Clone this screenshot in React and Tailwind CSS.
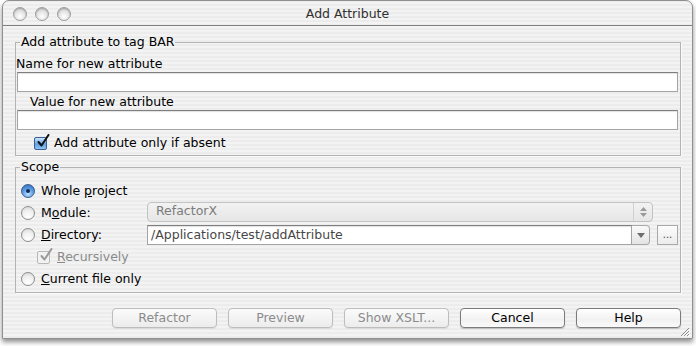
import React from "react";

const FONT = { fontFamily: '"DejaVu Sans", "Liberation Sans", sans-serif' };

function Light() {
  return (
    <div className="w-[14px] h-[14px] rounded-full border border-[#9d9d9d] bg-[radial-gradient(circle_at_50%_70%,#ffffff_0%,#e6e6e6_45%,#bdbdbd_100%)] shadow-[inset_0_1px_1px_rgba(0,0,0,0.2)]" />
  );
}

function Radio({ checked }) {
  if (checked) {
    return (
      <div className="w-[14px] h-[14px] shrink-0 rounded-full border border-[#3a5f94] bg-[radial-gradient(circle_at_50%_75%,#bfe3ff_0%,#5a9be0_50%,#2c62b4_100%)] flex items-center justify-center">
        <div className="w-[4px] h-[4px] rounded-full bg-[#102a55]" />
      </div>
    );
  }
  return (
    <div className="w-[14px] h-[14px] shrink-0 rounded-full border border-[#8e8e8e] bg-[radial-gradient(circle_at_50%_80%,#ffffff_0%,#f1f1f1_50%,#d2d2d2_100%)]" />
  );
}

function Check({ disabled }) {
  return (
    <div
      className={
        disabled
          ? "w-[13px] h-[13px] shrink-0 border border-[#b8b8b8] bg-[#f2f2f2] rounded-[2px] relative"
          : "w-[13px] h-[13px] shrink-0 border border-[#3a5f94] bg-[linear-gradient(#cfe6ff,#5f9ee3_55%,#8fc3f5)] rounded-[2px] relative"
      }
    >
      <svg viewBox="0 0 14 14" className="absolute left-[1px] top-[-4px] w-[14px] h-[14px]">
        <path
          d="M2.5 8 L5.5 11.5 L12.5 1"
          fill="none"
          stroke={disabled ? "#9a9a9a" : "#111"}
          strokeWidth="2"
          strokeLinecap="round"
          strokeLinejoin="round"
        />
      </svg>
    </div>
  );
}

function TextField({ className = "" }) {
  return (
    <div
      className={`h-[20px] bg-white border border-[#a4a4a4] border-t-[#7e7e7e] shadow-[inset_0_1px_1px_rgba(0,0,0,0.12)] ${className}`}
    />
  );
}

function Button({ label, disabled }) {
  return (
    <div
      className={
        disabled
          ? "w-[105px] h-[20px] rounded-[4px] border border-[#bdbdbd] bg-[linear-gradient(#fbfbfb,#ececec)] text-[#8b8b8b] flex items-center justify-center shadow-[0_1px_1px_rgba(0,0,0,0.08)]"
          : "w-[105px] h-[20px] rounded-[4px] border border-[#7b7b7b] bg-[linear-gradient(#ffffff,#f1f1f1_60%,#fafafa)] text-black flex items-center justify-center shadow-[0_1px_1px_rgba(0,0,0,0.2)]"
      }
    >
      {label}
    </div>
  );
}

function Legend({ children }) {
  return <legend className="ml-[4px] px-[1px] leading-4 text-black">{children}</legend>;
}

export default function App() {
  const stripes =
    "bg-[repeating-linear-gradient(0deg,#ececec_0px,#ececec_2px,#f3f3f3_2px,#f3f3f3_4px)]";

  return (
    <div className="w-[696px] h-[346px] bg-white text-[12.5px] overflow-hidden" style={FONT}>
      <div
        className={`relative ml-[2px] w-[691px] h-[339px] border border-[#8f8f8f] rounded-t-[7px] overflow-hidden shadow-[0_3px_5px_rgba(0,0,0,0.45)] ${stripes}`}
      >
        {/* title bar */}
        <div className="h-[25px] border-b border-[#808080] flex items-center relative">
          <div className="flex gap-[8px] pl-[10px] pt-[2px]">
            <Light />
            <Light />
            <Light />
          </div>
          <div className="absolute inset-0 flex items-center justify-center pt-[2px] text-[#303030]">
            Add Attribute
          </div>
        </div>

        <div className="pl-[12px] pr-[11px]">
          {/* fieldset 1 */}
          <fieldset className="mt-[8px] border border-[#b3b3b3] shadow-[1px_1px_0_#fafafa] pb-[4px]">
            <Legend>Add attribute to tag BAR</Legend>
            <div className="pt-[6px] leading-4 text-black">Name for new attribute</div>
            <TextField className="ml-[1px] mr-[2px]" />
            <div className="mt-[2px] ml-[14px] leading-4 text-black">Value for new attribute</div>
            <TextField className="ml-[1px] mr-[2px]" />
            <div className="mt-[5px] ml-[18px] h-4 flex items-center gap-[7px] text-black">
              <Check />
              <span>Add attribute only if absent</span>
            </div>
          </fieldset>

          {/* fieldset 2 */}
          <fieldset className="mt-[3px] border border-[#b3b3b3] shadow-[1px_1px_0_#fafafa] pt-[5px] pb-[2px]">
            <Legend>Scope</Legend>
            <div className="h-[22px] flex items-center pl-[5px] text-black">
              <Radio checked />
              <span className="ml-[6px]">
                Whole <span className="underline">p</span>roject
              </span>
            </div>
            <div className="h-[22px] flex items-center pl-[5px] pr-[27px] text-black">
              <Radio />
              <span className="ml-[6px] w-[106px]">
                M<span className="underline">o</span>dule:
              </span>
              <div className="flex-1 h-[20px] -mt-[3px] rounded-[4px] border border-[#c2c2c2] bg-[linear-gradient(#f2f2f2,#e6e6e6)] flex items-center">
                <span className="flex-1 pl-[8px] text-[#7c7c7c]">RefactorX</span>
                <div className="w-[19px] h-full border-l border-[#d0d0d0] flex flex-col items-center justify-center gap-[2px]">
                  <svg width="7" height="4" viewBox="0 0 7 4">
                    <path d="M0 4 L3.5 0 L7 4 Z" fill="#9a9a9a" />
                  </svg>
                  <svg width="7" height="4" viewBox="0 0 7 4">
                    <path d="M0 0 L3.5 4 L7 0 Z" fill="#9a9a9a" />
                  </svg>
                </div>
              </div>
            </div>
            <div className="h-[22px] flex items-center pl-[5px] pr-[2px] text-black">
              <Radio />
              <span className="ml-[6px] w-[106px]">
                <span className="underline">D</span>irectory:
              </span>
              <div className="flex-1 h-[20px] flex">
                <div className="flex-1 bg-white border border-[#a4a4a4] border-t-[#7e7e7e] flex items-center pl-[3px] text-[#474747] shadow-[inset_0_1px_1px_rgba(0,0,0,0.12)]">
                  /Applications/test/addAttribute
                </div>
                <div className="w-[18px] rounded-r-[4px] border border-l-0 border-[#a8a8a8] bg-[linear-gradient(#fafafa,#e4e4e4)] flex items-center justify-center">
                  <svg width="8" height="5" viewBox="0 0 8 5">
                    <path d="M0 0 L4 5 L8 0 Z" fill="#6d6d6d" />
                  </svg>
                </div>
              </div>
              <div className="ml-[7px] w-[21px] h-[20px] border border-[#a9a9a9] bg-[linear-gradient(#fcfcfc,#ececec)] flex items-center justify-center text-[10px] text-[#444] pb-[2px]">
                ...
              </div>
            </div>
            <div className="h-[22px] flex items-center pl-[21px] text-[#8a8a8a]">
              <Check disabled />
              <span className="ml-[7px]">
                <span className="underline">R</span>ecursively
              </span>
            </div>
            <div className="h-[22px] flex items-center pl-[5px] text-black">
              <Radio />
              <span className="ml-[6px]">
                <span className="underline">C</span>urrent file only
              </span>
            </div>
          </fieldset>

          {/* buttons */}
          <div className="mt-[15px] flex justify-end gap-[11px]">
            <Button label="Refactor" disabled />
            <Button label="Preview" disabled />
            <Button label="Show XSLT..." disabled />
            <Button label="Cancel" />
            <Button label="Help" />
          </div>
        </div>

        {/* resize grip */}
        <svg className="absolute right-[2px] bottom-[1px]" width="12" height="12" viewBox="0 0 12 12">
          <path d="M11 3 L3 11 M11 6 L6 11 M11 9 L9 11" stroke="#8a8a8a" strokeWidth="1" />
          <path d="M12 4 L4 12 M12 7 L7 12 M12 10 L10 12" stroke="#ffffff" strokeWidth="1" />
        </svg>
      </div>
    </div>
  );
}
